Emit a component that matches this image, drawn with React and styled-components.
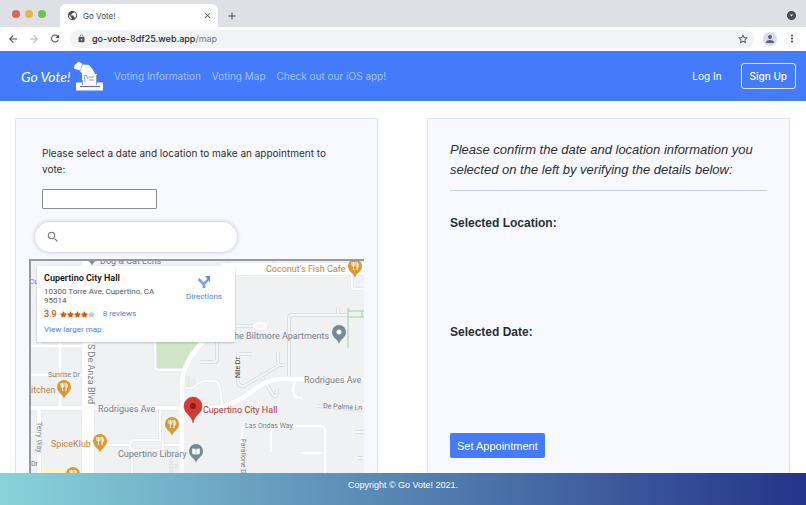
import React from 'react'
import styled, { createGlobalStyle } from 'styled-components'
import {
  MdArrowBack,
  MdArrowForward,
  MdRefresh,
  MdLock,
  MdStarBorder,
  MdPerson,
  MdMoreVert,
  MdClose,
  MdAdd,
  MdPublic,
  MdArrowDropDownCircle,
  MdSearch
} from 'react-icons/md'
import { FaStar } from 'react-icons/fa'

const GlobalStyle = createGlobalStyle`
  * {
    box-sizing: border-box;
  }

  body {
    margin: 0;
    background: #fff;
    color: #2b2f33;
    font-family: Inter, "Open Sans", sans-serif;
  }

  button, input {
    font: inherit;
  }
`

const Page = styled.div`
  display: flex;
  flex-direction: column;
  height: 100vh;
  overflow: hidden;
`

/* browser chrome */

const TabStrip = styled.div`
  display: flex;
  flex: none;
  align-items: flex-end;
  height: 27px;
  padding: 0 9px 0 12px;
  background: #dee0e5;
`

const Lights = styled.div`
  display: flex;
  align-self: center;
  gap: 5px;
  width: 48px;
`

const Light = styled.span`
  width: 8px;
  height: 8px;
  border-radius: 50%;
  background: ${props => props.$color};
`

const Tab = styled.div`
  display: flex;
  align-items: center;
  gap: 5px;
  width: 158px;
  height: 23px;
  padding: 0 6px 0 7px;
  border-radius: 6px 6px 0 0;
  background: #fff;
  color: #45494d;
  font-size: 8px;
`

const TabTitle = styled.span`
  flex: 1;
`

const IconButton = styled.button`
  display: flex;
  align-items: center;
  justify-content: center;
  flex: none;
  width: ${props => props.$size || 12}px;
  height: ${props => props.$size || 12}px;
  padding: 0;
  border: 0;
  border-radius: 50%;
  background: ${props => props.$fill || 'none'};
  color: ${props => props.$color || '#4a4d51'};
`

const NewTab = styled.div`
  display: flex;
  flex: 1;
  align-items: center;
  justify-content: space-between;
  height: 23px;
  padding-left: 8px;
`

const Toolbar = styled.div`
  display: flex;
  flex: none;
  align-items: center;
  gap: 9px;
  height: 24px;
  padding: 0 8px 1px 7px;
  background: #fff;
`

const AddressBar = styled.div`
  display: flex;
  flex: 1;
  align-items: center;
  gap: 6px;
  height: 18px;
  padding: 0 5px 0 7px;
  border-radius: 9px;
  background: #f1f3f4;
  color: #55585c;
`

const Url = styled.span`
  flex: 1;
  color: #75787c;
  font-size: 9px;

  b {
    color: #26292c;
    font-weight: 500;
  }
`

/* site header */

const Navbar = styled.nav`
  display: flex;
  flex: none;
  align-items: center;
  gap: 11px;
  height: 50px;
  padding: 0 10px 0 21px;
  background: #437bfb;
`

const Brand = styled.a`
  display: flex;
  align-items: center;
  gap: 3px;
  width: 82px;
  color: #fff;
  font-family: Lato, sans-serif;
  font-size: 14px;
  font-style: italic;
  text-decoration: none;
  white-space: nowrap;
`

const NavLink = styled.a`
  color: ${props => props.$bright ? '#fff' : '#a5c0ff'};
  font-size: 10px;
  text-decoration: none;
  white-space: nowrap;
`

const NavRight = styled.div`
  display: flex;
  align-items: center;
  gap: 19px;
  margin-left: auto;
`

const SignUp = styled.button`
  height: 26px;
  padding: 0 8px;
  border: 1px solid #dfe8ff;
  border-radius: 3px;
  background: none;
  color: #fff;
  font-size: 10px;
  font-weight: 500;
`

/* panels */

const Main = styled.main`
  display: grid;
  flex: 1;
  grid-template-columns: 1fr 1fr;
  gap: 49px;
  min-height: 0;
  padding: 17px 16px 0 15px;
  overflow: hidden;
`

const Panel = styled.section`
  display: flex;
  flex-direction: column;
  align-items: flex-start;
  padding: ${props => props.$padding};
  border: 1px solid #d9e5ee;
  border-bottom: 0;
  border-radius: 2px 2px 0 0;
  background: #f8f9ff;
`

const Intro = styled.label`
  max-width: 300px;
  margin: 0 13px 12px;
  font-size: 10px;
  line-height: 16px;
`

const DateInput = styled.input`
  width: 115px;
  height: 20px;
  margin: 0 13px 13px;
  padding: 0 4px;
  border: 1px solid #8b8d92;
  border-radius: 1px;
  background: #fff;
`

const SearchBox = styled.div`
  display: flex;
  flex: none;
  align-items: center;
  gap: 8px;
  width: 202px;
  height: 30px;
  margin: 0 6px 7px;
  padding: 0 11px;
  border-radius: 15px;
  background: #fff;
  box-shadow: 0 0 4px rgba(40, 45, 60, 0.3);
  color: #7d8084;
`

const SearchInput = styled.input`
  flex: 1;
  min-width: 0;
  border: 0;
  outline: 0;
  background: none;
  font-size: 10px;
`

const MapFrame = styled.div`
  position: relative;
  flex: none;
  width: 100%;
  height: 300px;
  overflow: hidden;
  border-top: 2px solid #98999d;
  border-left: 2px solid #98999d;
  background: #eff1f3;
  font-family: Roboto, sans-serif;
`

const MapDrawing = styled.svg`
  display: block;
  width: 100%;
  height: 100%;
`

const PlaceCard = styled.div`
  position: absolute;
  top: 5px;
  left: 6px;
  display: flex;
  justify-content: space-between;
  width: 198px;
  height: 76px;
  padding: 7px 13px 0 7px;
  background: #fff;
  box-shadow: 0 1px 2px rgba(0, 0, 0, 0.2);
`

const PlaceInfo = styled.div`
  width: 118px;
  color: #55585b;
  font-size: 8px;
  line-height: 9px;
`

const PlaceName = styled.h3`
  margin: 0 0 3px;
  color: #111;
  font-size: 9px;
  font-weight: 600;
  line-height: 11px;
`

const Rating = styled.div`
  display: flex;
  align-items: center;
  margin: 4px 0 6px;
  color: #c3641b;
  line-height: 10px;
`

const Score = styled.span`
  margin-right: 3px;
  font-size: 9px;
  font-weight: 500;
`

const MapLink = styled.a`
  margin-left: ${props => props.$gap || 0}px;
  color: #4c80e6;
  font-size: 8px;
  line-height: 10px;
  text-decoration: none;
`

const Directions = styled.a`
  display: flex;
  flex-direction: column;
  align-items: center;
  gap: 3px;
  padding-top: 2px;
  color: #4c80e6;
  font-size: 8px;
  line-height: 10px;
  text-decoration: none;
`

const Notice = styled.p`
  width: 100%;
  margin: 0 0 24px;
  padding-bottom: 10px;
  border-bottom: 1px solid #c8d4e0;
  font-family: "Liberation Sans", sans-serif;
  font-size: 13px;
  font-style: italic;
  line-height: 20px;
`

const Detail = styled.div`
  height: 109px;
`

const DetailTitle = styled.h2`
  margin: 0;
  font-family: "Liberation Sans", sans-serif;
  font-size: 12px;
  font-weight: bold;
  line-height: 16px;
`

const SetButton = styled.button`
  height: 25px;
  padding: 0 7px;
  border: 0;
  border-radius: 2px;
  background: #437bfb;
  color: #fff;
  font-family: "Liberation Sans", sans-serif;
  font-size: 11px;
`

const Footer = styled.footer`
  flex: none;
  height: 32px;
  background: linear-gradient(90deg, #88d3da, #25348a);
  color: #fff;
  font-family: "Liberation Sans", sans-serif;
  font-size: 9px;
  line-height: 24px;
  text-align: center;
`

const BallotIcon = () => (
  <svg width="29" height="30" viewBox="0 0 29 30" fill="#fff" aria-hidden="true">
    <path d="M2 21.500H29V29.500H2Z" />
    <path d="M8 13H23V25H8Z" />
    <path d="M0.500 4L5 0.500 8.500 3 6 9.500 0 7.500Z" />
    <path d="M9 3.500L15 4 18.500 8 21 13 22 19H16L12 14 11 18 8.500 17.500 8 12.500 6 10Z" />
    <g fill="none" stroke="#7180c4" strokeWidth="0.800">
      <path d="M6 25.500H26" stroke="#6675b8" strokeWidth="1.200" />
      <path d="M11 21L10 14.500H12M12 14L14 18M14.500 16H20M15 19H20M22.500 14V24M8.500 19V24" />
    </g>
  </svg>
)

const DirectionsIcon = () => (
  <svg width="14" height="14" viewBox="0 0 14 14" fill="none" stroke="#7ba0f1" strokeWidth="2.600" aria-hidden="true">
    <path d="M7 13V9L11.500 4" />
    <path d="M1.500 4L7 9.500" />
    <path d="M8 1h5v6z" fill="#5f8ceb" stroke="none" />
  </svg>
)

// centre lines of the streets, with their widths
const lanes = [
  ['M258 117V57Q258 54 262 54H316M307 54V46', 4],
  ['M207 91V121Q208 126 213 125L247 105V91M247 104H254M231 116L242 134Q246 138 246 128M208 93H221', 4],
  ['M169 101H183Q186 101 186 97V79', 4],
  ['M204 65H228M286 145L332 149M332 171L324 171M332 197H327', 4],
  ['M198 0V4M243 0V4M140 205H151M140 197V212M157 128V115M162 118V125', 3]
]

const roads = [
  ['M57 0V300', 12],
  ['M0 114H57M29 75V147M0 85H51M9 75V85', 3],
  ['M0 147H151M8 147V300M0 174H8', 4],
  ['M124 79V107Q124 109 127 109H155', 2],
  ['M180 72C160 93 152 105 151 122V300', 5],
  ['M151 147H180C216 145 224 119 249 118H334', 5],
  ['M155 127H162C168 120 174 119 183 120Q188 120 189 127L191 144', 2],
  ['M265 119C261 127 259 137 271 137', 3],
  ['M63 184H98M132 184H151M129 149V179M101 189V300', 2],
  ['M103 179H128Q132 179 132 184T128 189H103Q99 189 99 184T103 179Z', 2],
  ['M211 300V169Q211 165 215 165H289Q294 165 294 170V300M240 166V191M270 192H292', 3],
  ['M321 12V25Q321 28 324 28H334', 2],
  ['M190 8H334', 12]
]

const pins = [
  { x: 324, y: 5, kind: 'food' },
  { x: 33, y: 126, kind: 'food' },
  { x: 69, y: 180, kind: 'food' },
  { x: 141, y: 163, kind: 'food' },
  { x: 42, y: 213, kind: 'food' },
  { x: 165, y: 190, kind: 'book' },
  { x: 308, y: 71, kind: 'dot' },
  { x: 61, y: -7, kind: 'dot' }
]

const labels = [
  { x: 235, y: 11, text: 'Coconut’s Fish Cafe', color: '#c9812f' },
  { x: 69, y: 3, text: 'Dog & Cat Lchs', color: '#75828a' },
  { x: -2, y: 23, text: 'Cu', size: 8, color: '#4c80e6' },
  { x: 203, y: 78, text: 'he Biltmore Apartments', color: '#75828a' },
  { x: 273, y: 122, text: 'Rodrigues Ave', color: '#777a7e' },
  { x: 67, y: 151, text: 'Rodrigues Ave', color: '#777a7e' },
  { x: 0, y: 132, text: 'itchen', color: '#c9812f' },
  { x: 20, y: 186, text: 'SpiceKlub', color: '#c9812f' },
  { x: 87, y: 196, text: 'Cupertino Library', color: '#75828a' },
  { x: 172, y: 152, text: 'Cupertino City Hall', color: '#b63737' },
  { x: 17, y: 116, text: 'Sunrise Dr', size: 7, color: '#777a7e' },
  { x: 214, y: 167, text: 'Las Ondas Way', size: 7, color: '#777a7e' },
  { x: 292, y: 147, text: 'De Palma Ln', size: 7, color: '#777a7e', turn: 3 },
  { x: 0, y: 205, text: 'Dr', size: 7, color: '#777a7e' },
  { x: 57, y: 83, text: 'S De Anza Blvd', color: '#777a7e', turn: 90 },
  { x: 6, y: 161, text: 'Terry Way', size: 7, color: '#777a7e', turn: 90 },
  { x: 210, y: 178, text: 'Farallone Dr', size: 7, color: '#777a7e', turn: 90 },
  { x: 209, y: 117, text: 'Nile Dr', size: 7, color: '#44474a', turn: -90 }
]

const Pin = ({ x, y, kind }) => (
  <g transform={`translate(${x} ${y})`}>
    <path d="M0 12C-1 7-7 6-7 0A7 7 0 0 1 7 0C7 6 1 7 0 12Z" fill={kind === 'food' ? '#dc9a32' : '#768a93'} />
    {kind === 'food' && (
      <path d="M-3-4V-1Q-3 0-1.500 0V4M-1.500-4V0Q0 0 0-1V-4M2 4V-4Q4-3 3 1H2" fill="none" stroke="#fff" />
    )}
    {kind === 'book' && <path d="M-4-3L0-2 4-3V3L0 4-4 3ZM0-2V4" fill="#fff" stroke="#768a93" strokeWidth="0.500" />}
    {kind === 'dot' && <circle r="2.500" fill="#fff" />}
  </g>
)

const StreetMap = () => (
  <MapDrawing viewBox="0 0 334 298" preserveAspectRatio="xMinYMin slice" role="img" aria-label="Map of Cupertino City Hall">
    <path d="M126 76H172C160 90 154 97 153 107H126Z" fill="#cfe5c6" />
    <path d="M11 207H36V240H11Z" fill="#fdf3d0" />
    <g fill="none" strokeLinejoin="round">
      {lanes.map(([d, width]) => <path key={d} d={d} stroke="#dcdfe2" strokeWidth={width} />)}
      {lanes.map(([d, width]) => <path key={d} d={d} stroke="#f4f5f7" strokeWidth={width - 2} />)}
      <ellipse cx="229" cy="65" rx="6" ry="3" fill="#f4f5f7" stroke="#fff" strokeWidth="2" />
      {roads.map(([d, width]) => <path key={d} d={d} stroke="#e2e5e8" strokeWidth={width + 1} />)}
      {roads.map(([d, width]) => <path key={d} d={d} stroke="#fff" strokeWidth={width} />)}
      <path d="M317 47V87M317 50H334M317 56H334M331 50V56" stroke="#a5cfa9" />
    </g>
    {pins.map(pin => <Pin key={`${pin.x}-${pin.y}`} {...pin} />)}
    <path d="M162 162C161 154 153 153 153 145A9 9 0 0 1 171 145C171 153 163 154 162 162Z" fill="#d33b35" stroke="#b52d29" strokeWidth="0.500" />
    <circle cx="162" cy="145" r="3" fill="#8c1b18" />
    {labels.map(({ x, y, text, size = 9, color, turn = 0 }) => (
      <text key={`${x}-${y}`} fontSize={size} fill={color} transform={`translate(${x} ${y}) rotate(${turn})`}>
        {text}
      </text>
    ))}
  </MapDrawing>
)

const BrowserBar = () => (
  <>
    <TabStrip>
      <Lights>
        <Light $color="#e0605a" />
        <Light $color="#e9b443" />
        <Light $color="#6bc254" />
      </Lights>
      <Tab>
        <MdPublic size={11} />
        <TabTitle>Go Vote!</TabTitle>
        <IconButton $size={10} aria-label="Close tab"><MdClose size={9} /></IconButton>
      </Tab>
      <NewTab>
        <IconButton aria-label="New tab"><MdAdd size={12} /></IconButton>
        <IconButton aria-label="Search tabs"><MdArrowDropDownCircle size={11} /></IconButton>
      </NewTab>
    </TabStrip>
    <Toolbar>
      <IconButton aria-label="Back"><MdArrowBack size={12} /></IconButton>
      <IconButton $color="#b4b6b9" aria-label="Forward"><MdArrowForward size={12} /></IconButton>
      <IconButton aria-label="Reload"><MdRefresh size={13} /></IconButton>
      <AddressBar>
        <MdLock size={9} />
        <Url><b>go-vote-8df25.web.app</b>/map</Url>
        <IconButton aria-label="Bookmark"><MdStarBorder size={12} /></IconButton>
      </AddressBar>
      <IconButton $size={14} $fill="#d9dbe2" $color="#5a6078" aria-label="Profile"><MdPerson size={12} /></IconButton>
      <IconButton aria-label="Menu"><MdMoreVert size={13} /></IconButton>
    </Toolbar>
  </>
)

const App = () => (
  <Page>
    <GlobalStyle />
    <BrowserBar />
    <Navbar>
      <Brand href="#">
        Go Vote!
        <BallotIcon />
      </Brand>
      <NavLink href="#">Voting Information</NavLink>
      <NavLink href="#">Voting Map</NavLink>
      <NavLink href="#">Check out our iOS app!</NavLink>
      <NavRight>
        <NavLink $bright href="#">Log In</NavLink>
        <SignUp>Sign Up</SignUp>
      </NavRight>
    </Navbar>
    <Main>
      <Panel $padding="26px 13px 0">
        <Intro htmlFor="date">
          Please select a date and location to make an appointment to vote:
        </Intro>
        <DateInput id="date" type="text" />
        <SearchBox>
          <MdSearch size={14} />
          <SearchInput type="search" aria-label="Search locations" />
        </SearchBox>
        <MapFrame>
          <StreetMap />
          <PlaceCard>
            <PlaceInfo>
              <PlaceName>Cupertino City Hall</PlaceName>
              10300 Torre Ave, Cupertino, CA 95014
              <Rating>
                <Score>3.9</Score>
                {[1, 2, 3, 4, 5].map(n => (
                  <FaStar key={n} size={7} color={n < 5 ? '#c3641b' : '#c9cbce'} />
                ))}
                <MapLink $gap={8} href="#">8 reviews</MapLink>
              </Rating>
              <MapLink href="#">View larger map</MapLink>
            </PlaceInfo>
            <Directions href="#">
              <DirectionsIcon />
              Directions
            </Directions>
          </PlaceCard>
        </MapFrame>
      </Panel>
      <Panel $padding="21px 22px 0">
        <Notice>
          Please confirm the date and location information you selected on the left by verifying the details below:
        </Notice>
        <Detail>
          <DetailTitle>Selected Location:</DetailTitle>
        </Detail>
        <Detail>
          <DetailTitle>Selected Date:</DetailTitle>
        </Detail>
        <SetButton>Set Appointment</SetButton>
      </Panel>
    </Main>
    <Footer>Copyright © Go Vote! 2021.</Footer>
  </Page>
)

export default App
